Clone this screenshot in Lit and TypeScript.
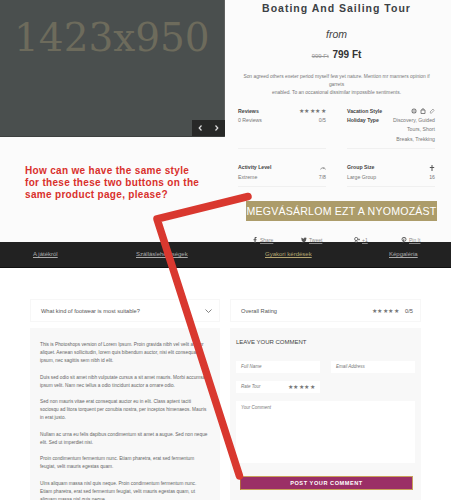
import { LitElement, html, css, svg } from "lit";
import { customElement } from "lit/decorators.js";

@customElement("app-root")
export class AppRoot extends LitElement {
  static styles = css`
    :host { display: block; width: 451px; height: 500px; overflow: hidden; position: relative; background: #fff;
      font-family: "Liberation Sans", Arial, sans-serif; color: #555; }
    * { box-sizing: border-box; }
    .top { display: grid; grid-template-columns: 225px 226px; height: 242px; background: #fbfbfb; }
    .left { display: flex; flex-direction: column; }
    .hero { height: 137px; background: #4a4f4e; position: relative; padding: 15px 0 0 14px; border-bottom: 1px solid #3d403f; border-right: 1px solid #5f6160; }
    .hero-text { font-family: "DejaVu Serif", serif; font-size: 39px; line-height: 46px; color: #6d6b5c; white-space: nowrap; }
    .ctrl { position: absolute; right: -1px; bottom: 0; width: 33px; height: 16px; background: #272827; display: flex; align-items: center; justify-content: space-around; }
    .ctrl svg { width: 5px; height: 6px; }
    .ask { padding: 28px 0 0 25px; font-size: 10px; font-weight: 700; line-height: 12px; letter-spacing: 0.32px; color: #d9302c; white-space: pre-line; }
    .right { padding: 0 16px 0 13px; display: flex; flex-direction: column; }
    h1 { margin: 2px 0 0; text-align: center; font-size: 10.5px; line-height: 12px; letter-spacing: 1px; color: #3c4145; font-weight: 700; }
    .from { margin-top: 14px; text-align: center; font-size: 10.5px; line-height: 12px; font-style: italic; color: #444; }
    .price { margin-top: 9px; text-align: center; font-size: 10px; line-height: 12px; font-weight: 700; color: #333; }
    .price s { font-size: 6px; font-weight: 400; color: #999; margin-right: 1px; }
    .desc { margin-top: 11px; text-align: center; font-size: 4.9px; line-height: 8.2px; color: #777; white-space: pre-line; }
    .specs { margin-top: 9px; display: grid; grid-template-columns: 88px 88px; column-gap: 21px; font-size: 5.2px; line-height: 9.4px; color: #777; }
    .spec { padding-bottom: 4px; border-bottom: 1px solid #f0f0f0; }
    .spec.low { margin-top: 14px; }
    .row { display: flex; justify-content: space-between; }
    .row b { color: #444; font-weight: 700; }
    .stars { color: #777; letter-spacing: 0.4px; font-size: 5.5px; }
    .val { text-align: right; }
    .icons { display: flex; gap: 3px; align-items: center; }
    .icons svg { width: 6px; height: 6px; }
    .buy { margin: 14px -2px 0 8px; height: 20px; background: #ac9c6a; color: #fff; font-size: 10.6px; line-height: 20px; text-align: center; letter-spacing: 0.2px; white-space: nowrap; }
    .share { margin-top: 15px; display: grid; grid-template-columns: 49px 53px 47px auto; padding-left: 14px; font-size: 5px; line-height: 8px; color: #888; }
    .share span { display: flex; align-items: center; gap: 2px; text-decoration: underline; }
    .share svg { width: 6px; height: 6px; }
    nav { height: 26px; background: #222; border-bottom: 1px solid #111; display: grid; grid-template-columns: 103px 129px 124px auto; padding: 0 0 0 33px; font-size: 6px; line-height: 25px; color: #aaa; }
    nav span { text-decoration: underline; }
    nav .on { color: #b5a671; }
    .bottom { display: grid; grid-template-columns: 190px 191px; column-gap: 10px; padding: 31px 0 0 30px; }
    .card { height: 23px; border: 1px solid #f7f7f7; display: flex; align-items: center; justify-content: space-between; font-size: 5.7px; color: #555; padding: 0 7px 0 10px; }
    .card svg { width: 7px; height: 4px; }
    .rate { display: flex; gap: 6px; align-items: center; }
    .panel { margin-top: 6px; background: #f8f8f8; height: 200px; }
    .lorem { padding: 13px 10px; font-size: 4.75px; line-height: 8.15px; color: #666; white-space: pre-line; }
    .form { padding: 9px 6px 0; position: relative; }
    h3 { margin: 0; font-size: 6px; font-weight: 400; line-height: 10px; color: #444; }
    .fields { margin-top: 14px; display: grid; grid-template-columns: 84px 84px; column-gap: 11px; row-gap: 8px; }
    .field { height: 12px; background: #fff; font-size: 4.5px; line-height: 12px; font-style: italic; padding: 0 5px; color: #777; display: flex; justify-content: space-between; }
    .field .stars { font-style: normal; font-size: 6px; }
    .area { margin-top: 8px; width: 179px; height: 62px; background: #fff; font-size: 4.5px; font-style: italic; color: #777; padding: 3px 5px; line-height: 7px; }
    .post { margin: 13px 0 0 4px; width: 173px; height: 14px; background: #9b2f66; border: 1px solid #c9a05a; border-left-color: #b0653f; color: #fff; text-align: center; font-size: 5.6px; font-weight: 700; letter-spacing: 0.55px; line-height: 12px; }
    .mark { position: absolute; left: 0; top: 0; width: 451px; height: 500px; pointer-events: none; }
  `;

  render() {
    const stars = "★★★★★";
    return html`
      <div class="top">
        <div class="left">
          <div class="hero">
            <div class="hero-text">1423x950</div>
            <div class="ctrl">
              <svg viewBox="0 0 5 6"><path d="M3.5 .5 1.2 3l2.3 2.5" fill="none" stroke="#ddd" stroke-width="1.2"/></svg>
              <svg viewBox="0 0 5 6"><path d="M1.5 .5 3.8 3 1.5 5.500" fill="none" stroke="#ddd" stroke-width="1.2"/></svg>
            </div>
          </div>
          <div class="ask">How can we have the same style
for these these two buttons on the
same product page, please?</div>
        </div>
        <div class="right">
          <h1>Boating And Sailing Tour</h1>
          <div class="from">from</div>
          <div class="price"><s>999 Ft</s> 799 Ft</div>
          <div class="desc">Son agreed others exeter period myself few yet nature. Mention mr manners opinion if garrets
enabled. To an occasional dissimilar impossible sentiments.</div>
          <div class="specs">
            <div class="spec">
              <div class="row"><b>Reviews</b><span class="stars">${stars}</span></div>
              <div class="row"><span>0 Reviews</span><span>0/5</span></div>
            </div>
            <div class="spec">
              <div class="row"><b>Vacation Style</b>
                <span class="icons">
                  <svg viewBox="0 0 6 6"><circle cx="3" cy="3" r="2.5" fill="#777"/><path d="M1 3h4M3 1v4" stroke="#fff" stroke-width=".7"/></svg>
                  <svg viewBox="0 0 6 6"><path d="M1 2h4v3.500H1zM2 2c0-2 2-2 2 0" fill="none" stroke="#666" stroke-width=".8"/></svg>
                  <svg viewBox="0 0 6 6"><path d="M1 4 4 1l1 1.500L2 5.500z" fill="none" stroke="#999" stroke-width=".8"/></svg>
                </span></div>
              <div class="row"><b>Holiday Type</b><span>Discovery, Guided</span></div>
              <div class="val">Tours, Short</div>
              <div class="val">Breaks, Trekking</div>
            </div>
            <div class="spec low">
              <div class="row"><b>Activity Level</b>
                <span class="icons"><svg viewBox="0 0 6 6"><path d="M.6 4.500a2.500 2.500 0 0 1 4.800 0M3 4 4 2.500" fill="none" stroke="#777" stroke-width=".7"/></svg></span></div>
              <div class="row"><span>Extreme</span><span>7/8</span></div>
            </div>
            <div class="spec low">
              <div class="row"><b>Group Size</b>
                <span class="icons"><svg viewBox="0 0 6 6"><path d="M3 0v6M.8 2.500h4.400" stroke="#555" stroke-width="1"/></svg></span></div>
              <div class="row"><span>Large Group</span><span>16</span></div>
            </div>
          </div>
          <div class="buy">MEGVÁSÁRLOM EZT A NYOMOZÁST</div>
          <div class="share">
            <span><svg viewBox="0 0 6 6"><path d="M2.500 6V3.300H1.500V2.200h1V1.400C2.500.5 3 0 3.800 0h.8v1.100H4c-.3 0-.4.200-.4.400v.7h1l-.2 1.100h-.8V6z" fill="#555"/></svg>Share</span>
            <span><svg viewBox="0 0 6 6"><path d="M0 5c2 1 5.500.5 5.300-3.500L6 .8l-.8.200C4.500 0 3 .5 3 1.800 2 1.800 1 1.200.4.600c-.3.700 0 1.500.5 1.900l-.6-.1c0 .7.500 1.200 1.100 1.300-.2.100-.4.100-.6 0 .2.500.6.800 1.200.8C1.500 5 .7 5.100 0 5z" fill="#555"/></svg>Tweet</span>
            <span><svg viewBox="0 0 6 6"><circle cx="2.200" cy="2" r="1.600" fill="none" stroke="#555" stroke-width=".8"/><circle cx="2.200" cy="4.700" r="1" fill="none" stroke="#555" stroke-width=".7"/><path d="M4 2.500h2M5 1.500v2" stroke="#555" stroke-width=".6"/></svg>+1</span>
            <span><svg viewBox="0 0 6 6"><circle cx="3" cy="2.300" r="2" fill="none" stroke="#555" stroke-width=".9"/><path d="M3 1.500 2 6" stroke="#555" stroke-width=".8"/></svg>Pin It</span>
          </div>
        </div>
      </div>
      <nav>
        <span>A játékról</span>
        <span>Szálláslehetőségek</span>
        <span class="on">Gyakori kérdések</span>
        <span>Képgaléria</span>
      </nav>
      <div class="bottom">
        <div>
          <div class="card">What kind of footwear is most suitable?
            <svg viewBox="0 0 7 4"><path d="M.5.500 3.500 3.500 6.500.500" fill="none" stroke="#666" stroke-width=".8"/></svg>
          </div>
          <div class="panel"><div class="lorem">This is Photoshops version of Lorem Ipsum. Proin gravida nibh vel velit auctor
aliquet. Aenean sollicitudin, lorem quis bibendum auctor, nisi elit consequat
ipsum, nec sagittis sem nibh id elit.

Duis sed odio sit amet nibh vulputate cursus a sit amet mauris. Morbi accumsan
ipsum velit. Nam nec tellus a odio tincidunt auctor a ornare odio.

Sed non mauris vitae erat consequat auctor eu in elit. Class aptent taciti
sociosqu ad litora torquent per conubia nostra, per inceptos himenaeos. Mauris
in erat justo.

Nullam ac urna eu felis dapibus condimentum sit amet a augue. Sed non neque
elit. Sed ut imperdiet nisi.

Proin condimentum fermentum nunc. Etiam pharetra, erat sed fermentum
feugiat, velit mauris egestas quam.

Ulns aliquam massa nisl quis neque. Proin condimentum fermentum nunc.
Etiam pharetra, erat sed fermentum feugiat, velit mauris egestas quam, ut
aliquam massa nisl quis neque.</div></div>
        </div>
        <div>
          <div class="card">Overall Rating
            <span class="rate"><span class="stars">${stars}</span><span>0/5</span></span>
          </div>
          <div class="panel form">
            <h3>LEAVE YOUR COMMENT</h3>
            <div class="fields">
              <div class="field">Full Name</div>
              <div class="field">Email Address</div>
              <div class="field">Rate Tour<span class="stars">${stars}</span></div>
            </div>
            <div class="area">Your Comment</div>
            <div class="post">POST YOUR COMMENT</div>
          </div>
        </div>
      </div>
      <svg class="mark" viewBox="0 0 451 500">
        ${svg`<path d="M248 196.500 157 219 239.500 476" fill="none" stroke="#d9382f" stroke-width="7.500" stroke-linejoin="round" stroke-linecap="round"/>`}
      </svg>
    `;
  }
}
